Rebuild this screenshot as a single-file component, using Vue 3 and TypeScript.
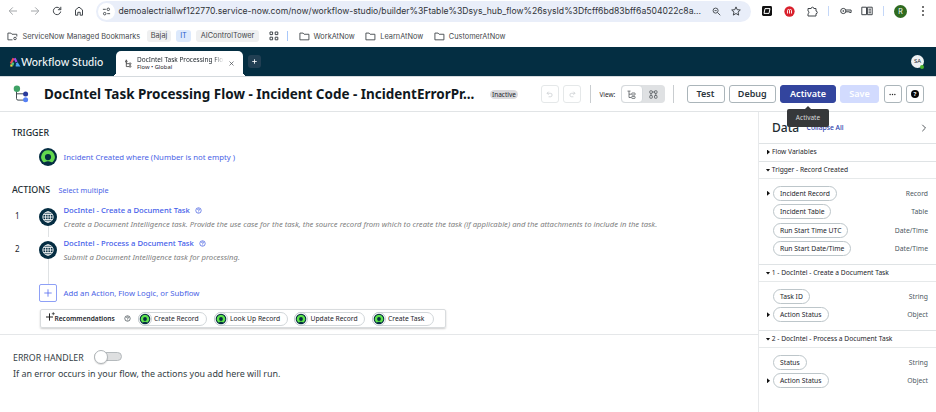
<script setup lang="ts">
interface Variable { name: string; type: string; expandable?: boolean }
interface Section { title: string; open: boolean; items: Variable[] }
interface Action { title: string; description: string }

const bookmarks: string[] = ['WorkAtNow', 'LearnAtNow', 'CustomerAtNow']
const recommendations: string[] = ['Create Record', 'Look Up Record', 'Update Record', 'Create Task']
const actions: Action[] = [
  {
    title: 'DocIntel - Create a Document Task',
    description:
      'Create a Document Intelligence task. Provide the use case for the task, the source record from which to create the task (if applicable) and the attachments to include in the task.',
  },
  { title: 'DocIntel - Process a Document Task', description: 'Submit a Document Intelligence task for processing.' },
]
const sections: Section[] = [
  { title: 'Flow Variables', open: false, items: [] },
  {
    title: 'Trigger - Record Created',
    open: true,
    items: [
      { name: 'Incident Record', type: 'Record', expandable: true },
      { name: 'Incident Table', type: 'Table' },
      { name: 'Run Start Time UTC', type: 'Date/Time' },
      { name: 'Run Start Date/Time', type: 'Date/Time' },
    ],
  },
  {
    title: '1 - DocIntel - Create a Document Task',
    open: true,
    items: [
      { name: 'Task ID', type: 'String' },
      { name: 'Action Status', type: 'Object', expandable: true },
    ],
  },
  {
    title: '2 - DocIntel - Process a Document Task',
    open: true,
    items: [
      { name: 'Status', type: 'String' },
      { name: 'Action Status', type: 'Object', expandable: true },
    ],
  },
]
</script>

<template>
  <div class="window">
    <div class="toolbar">
      <svg class="nav back" viewBox="0 0 10 10"><path d="M9 5H1.4M4.8 1.4 1.2 5l3.6 3.6" /></svg>
      <svg class="nav forward" viewBox="0 0 10 10"><path d="M1 5h7.6M5.2 1.4 8.8 5 5.2 8.6" /></svg>
      <svg class="nav" viewBox="0 0 10 10"><path d="M8.7 5.5A3.7 3.7 0 1 1 7.9 2.6L8.8 3.6M8.8.8v2.9H5.9" /></svg>
      <svg class="nav" viewBox="0 0 10 10"><path d="M1.5 9.2V3.9L5 1.1l3.5 2.8v5.3H6.2V6.3H3.8v2.9z" /></svg>
      <div class="address">
        <span class="site"><svg viewBox="0 0 10 10"><path d="M1 2.6h3.2M5.8 7.4H9" /><circle cx="7" cy="2.6" r="1.4" /><circle cx="3" cy="7.4" r="1.4" /></svg></span>
        <span class="url">demoalectriallwf122770.service-now.com/now/workflow-studio/builder%3Ftable%3Dsys_hub_flow%26sysId%3Dfcff6bd83bff6a504022c8a...</span>
        <svg class="glass" viewBox="0 0 10 10"><circle cx="4" cy="4" r="2.8" /><path d="m6.2 6.2 3 3M2.8 4h2.4" /></svg>
        <svg class="star" viewBox="0 0 10 10"><path d="m5 .9 1.2 2.8 3.1.3L7 6.1l.7 3L5 7.5 2.3 9.1l.7-3L.7 4l3.1-.3z" /></svg>
      </div>
      <svg class="ext-black" viewBox="0 0 10 10"><rect width="10" height="10" rx="1.4" /><path d="m3 2.6h5L7 7.4H2z" /></svg>
      <svg class="ext-red" viewBox="0 0 12 12"><circle cx="6" cy="6" r="5.6" /><path d="M3.8 8.2V5q0-1.2 1.1-1.2T6 5v3.2M6 5q0-1.2 1.1-1.2T8.2 5v3.2" /></svg>
      <svg class="puzzle" viewBox="0 0 11 11"><path d="M1 2.5h3.2a1.3 1.3 0 0 1 2.6 0H9v2.6a1.3 1.3 0 0 1 0 2.6V10H1V7.6a1.3 1.3 0 0 0 0-2.5z" /></svg>
      <i class="split s1"></i>
      <svg class="key" viewBox="0 0 12 8"><circle cx="3.3" cy="4" r="2.6" /><circle cx="3.3" cy="4" r=".5" /><path d="M5.8 3h5.3v2.5H9.6V4.8H5.8" /></svg>
      <svg class="reader" viewBox="0 0 12 10"><path d="M.8 1.2h4.7v7.5H.8zM6.4 1.2h4.8v7.5H6.4zM7.5 3.2H10M7.5 5H10M7.5 6.8H10" /></svg>
      <i class="split s2"></i>
      <span class="profile">R</span>
      <svg class="kebab" viewBox="0 0 4 12"><circle cx="2" cy="2" r="1" /><circle cx="2" cy="6" r="1" /><circle cx="2" cy="10" r="1" /></svg>
    </div>

    <div class="bookmarks">
      <svg class="folder managed" viewBox="0 0 12 10"><path d="M6 8.7H.9V1.2h3.3l1.2 1.3h5.4V5" /><circle cx="8.8" cy="7.2" r="1.4" /></svg>
      <span class="bm-name">ServiceNow Managed Bookmarks</span>
      <span class="tag bajaj">Bajaj</span>
      <span class="tag it">IT</span>
      <span class="tag tower">AIControlTower</span>
      <svg class="apps" viewBox="0 0 10 10"><path d="M1 1h2.6v2.6H1zM6.2 1h2.6v2.6H6.2zM1 6.2h2.6v2.6H1zM6.2 6.2h2.6v2.6H6.2z" /></svg>
      <i class="split s3"></i>
      <span v-for="b in bookmarks" :key="b" class="bookmark">
        <svg class="folder" viewBox="0 0 12 10"><path d="M.9 1.2h3.5l1.2 1.3h5.3v6.2H.9z" /></svg>{{ b }}
      </span>
    </div>

    <header class="app-header">
      <svg class="logo" viewBox="0 0 11 10">
        <path d="M4.6 1.2 1.8 6.600" stroke="#ed4b54" /><path d="M1.3 8.5h2.2" stroke="#ffda38" /><path d="M4.200 5.5 3.3 8.4" stroke="#51c878" /><path d="M5.6 1.2 7.5 5" stroke="#a24be8" /><path d="M7.7 5.8 9.4 8.5H6.7" stroke="#4ba8f4" />
      </svg>
      <span class="brand">Workflow Studio</span>
      <div class="tab">
        <svg class="tab-icon" viewBox="0 0 8 10"><path d="M1.5 3v5.5h3M1.5 5.2h3" /><path d="M.5 3.2 1.5.8l1 2.4z" /><circle cx="5.8" cy="5.2" r="1" /><circle cx="5.8" cy="8.3" r="1" /></svg>
        <span class="tab-text"><span class="tab-title">DocIntel Task Processing Flo</span><span class="tab-sub">Flow • Global</span></span>
        <svg class="close" viewBox="0 0 6 6"><path d="m.6.6 4.8 4.8M5.4.6.6 5.4" /></svg>
      </div>
      <span class="new-tab"><svg viewBox="0 0 6 6"><path d="M3 .3v5.4M.3 3h5.4" /></svg></span>
      <span class="avatar">SA<i></i></span>
    </header>

    <div class="title-bar">
      <svg class="flow-icon" viewBox="0 0 16 18"><path d="M3.5 5v8.5q0 1.6 1.5 1.6h6M3.5 8.8h8" /><circle cx="3.9" cy="3.7" r="3.2" fill="#3fa266" /><circle cx="12.6" cy="8.9" r="2.500" fill="#28399b" /><circle cx="12.6" cy="14.8" r="2.500" fill="#5580f5" /></svg>
      <h1>DocIntel Task Processing Flow - Incident Code - IncidentErrorPr...</h1>
      <span class="status">Inactive</span>
      <button class="square undo"><svg viewBox="0 0 8 8"><path d="M3 .8 1.2 2.6 3 4.4M1.3 2.6H5a2 2 0 0 1 0 4H3" /></svg></button>
      <button class="square redo"><svg viewBox="0 0 8 8"><path d="M5 .8 6.8 2.6 5 4.4M6.7 2.6H3a2 2 0 0 0 0 4h2" /></svg></button>
      <i class="rule r1"></i>
      <span class="view">View:</span>
      <span class="toggle">
        <span class="seg on"><svg viewBox="0 0 9 9"><path d="M.5 1.1h3M2 1.2v6.3h2M2 4.2h2" /><rect x="4.7" y="3" width="3.4" height="2" rx=".5" /><rect x="4.7" y="6.4" width="3.4" height="2" rx=".5" /></svg></span>
        <span class="seg"><svg viewBox="0 0 9 9"><rect x=".8" y=".8" width="2.5" height="2.5" rx=".5" /><rect x="5.5" y=".8" width="2.5" height="2.5" rx=".5" /><rect x=".8" y="5.5" width="2.5" height="2.7" rx=".5" /><rect x="5.5" y="5.5" width="2.5" height="2.7" rx=".5" /><path d="M3.3 2h2.2M2 3.3v2.2M6.8 3.3v2.2" /></svg></span>
      </span>
      <i class="rule r2"></i>
      <button class="btn test">Test</button>
      <button class="btn debug">Debug</button>
      <span class="activate-wrap"><button class="btn activate">Activate</button><span class="tooltip">Activate</span></span>
      <button class="btn save">Save</button>
      <button class="square more"><svg viewBox="0 0 8 8"><circle cx="1.3" cy="4" r=".8" /><circle cx="4" cy="4" r=".8" /><circle cx="6.7" cy="4" r=".8" /></svg></button>
      <button class="square help"><span>?</span></button>
    </div>

    <div class="body">
      <main>
        <section class="flow">
          <h2 class="trigger-head">TRIGGER</h2>
          <div class="trigger">
            <svg class="now" viewBox="0 0 18 18"><circle cx="9" cy="9" r="9" fill="#052d42" /><path d="M9 2.2a6.800 6.800 0 0 0-4.7 11.700q.8.800 1.700.200Q9 12.400 12 14.100q.9.600 1.700-.200A6.800 6.800 0 0 0 9 2.200zM9 12.200a3.100 3.100 0 1 1 0-6.200 3.100 3.100 0 0 1 0 6.200z" fill="#62d84e" /></svg>
            <a>Incident Created where (Number is not empty )</a>
          </div>
          <div class="actions-head"><h2>ACTIONS</h2><a>Select multiple</a></div>
          <div class="steps">
            <div v-for="(a, i) in actions" :key="a.title" class="step">
              <span class="num">{{ i + 1 }}</span>
              <span class="node"><svg viewBox="0 0 18 18"><circle cx="9" cy="9" r="9" fill="#052d42" /><g fill="none" stroke="#fff" stroke-width=".8"><circle cx="9" cy="9" r="5.200" /><ellipse cx="9" cy="9" rx="2.500" ry="5.200" /><path d="M3.800 9h10.400M4.700 6.500h8.600M4.700 11.500h8.600M9 3.800v10.400" /></g></svg></span>
              <span class="step-text">
                <span class="step-title">{{ a.title }}<svg class="q" viewBox="0 0 8 8"><circle cx="4" cy="4" r="3.1" /><path d="M2.900 3.300q0-1.100 1.100-1.100t1.100 1Q5.100 3.900 4 4.300v.5M4 5.500v.6" /></svg></span>
                <em>{{ a.description }}</em>
              </span>
            </div>
          </div>
          <div class="add"><span class="plus"><svg viewBox="0 0 8 8"><path d="M4 .3v7.400M.3 4h7.400" /></svg></span><a>Add an Action, Flow Logic, or Subflow</a></div>
          <div class="recs">
            <svg class="spark" viewBox="0 0 9 9"><path d="M3.500 1.400V8.600M0 5h7" /><path d="M7.300.2v3M5.800 1.700h3" class="tiny" /></svg>
            <b>Recommendations</b>
            <svg class="q grey" viewBox="0 0 8 8"><circle cx="4" cy="4" r="3.100" /><path d="M2.900 3.300q0-1.100 1.100-1.100t1.100 1Q5.100 3.900 4 4.300v.5M4 5.500v.6" /></svg>
            <span v-for="(r, i) in recommendations" :key="r" class="rec" :class="'rec-' + i">
              <svg viewBox="0 0 14 14"><circle cx="7" cy="7" r="6.500" fill="#fff" stroke="#a9b3b8" stroke-width=".6" /><circle cx="7" cy="7" r="5.300" fill="#052d42" /><path d="M7 2.700a4.300 4.300 0 0 0-3 7.400q.6.500 1.100.1Q7 9.200 8.900 10.200q.5.400 1.100-.1A4.300 4.300 0 0 0 7 2.700zM7 8.900a1.900 1.900 0 1 1 0-3.800 1.900 1.900 0 0 1 0 3.800z" fill="#5de34b" /></svg>{{ r }}
            </span>
          </div>
        </section>
        <section class="errors">
          <div class="error-head">ERROR HANDLER<span class="switch"><i></i></span></div>
          <p>If an error occurs in your flow, the actions you add here will run.</p>
        </section>
      </main>

      <aside>
        <div class="data-head"><strong>Data</strong><a>Collapse All</a><svg viewBox="0 0 6 8"><path d="m1.300.8 3.200 3.200-3.200 3.200" /></svg></div>
        <section v-for="s in sections" :key="s.title" class="group" :class="{ open: s.open }">
          <h3><i class="caret" :class="{ down: s.open }"></i>{{ s.title }}</h3>
          <div v-if="s.open" class="vars">
            <div v-for="v in s.items" :key="v.name" class="var">
              <span class="lead"><i v-if="v.expandable" class="caret"></i></span>
              <span class="pill">{{ v.name }}</span>
              <span class="type">{{ v.type }}</span>
            </div>
          </div>
        </section>
      </aside>
    </div>
  </div>
</template>

<style>
html, body { margin: 0; background: #fff; overflow: hidden; }
</style>

<style scoped>
* { box-sizing: border-box; }
.window { width: 936px; height: 412px; overflow: hidden; background: #fff; font-family: "Noto Sans", "Open Sans", sans-serif; color: #1d252b; display: flex; flex-direction: column; }
svg { flex: none; display: block; fill: none; stroke: #41464b; stroke-width: 1; overflow: visible; }
i { display: block; flex: none; }
h1, h2, h3, p { margin: 0; }
button { font-family: inherit; padding: 0; margin: 0; }
a { color: #4a63e6; }

.toolbar { height: 24px; flex: none; display: flex; align-items: center; padding: 0 0 2px 7.500px; font-family: Inter, Roboto, sans-serif; }
.nav { width: 10px; height: 10px; margin-right: 12.300px; }
.back, .forward { stroke: #a3a6a9; }
.address { width: 655px; height: 21px; margin-left: -.7px; background: #e9eef9; border-radius: 11px; display: flex; align-items: center; flex: none; }
.site { width: 17px; height: 17px; margin-left: 1.500px; border-radius: 50%; background: #fff; display: flex; align-items: center; justify-content: center; flex: none; }
.site svg { width: 9px; height: 9px; }
.url { width: 592px; margin-left: 4px; font-size: 8.600px; color: #303338; white-space: nowrap; letter-spacing: 0.020px; flex: none; }
.glass { width: 9px; height: 9px; margin-left: 1px; }
.star { width: 10px; height: 10px; margin-left: 10.500px; }
.ext-black { width: 10px; height: 10px; margin-left: 11px; fill: #111; stroke: none; }
.ext-black path { stroke: #fff; fill: none; }
.ext-red { width: 11px; height: 11px; margin-left: 12px; stroke: #fff; }
.ext-red circle { fill: #d9202c; stroke: none; }
.puzzle { width: 11px; height: 11px; margin-left: 12px; }
.split { width: 1px; height: 10px; background: #c4d7f8; }
.s1 { margin-left: 10px; }
.key { width: 12px; height: 8px; margin-left: 11px; }
.reader { width: 12px; height: 10px; margin-left: 9px; }
.s2 { margin-left: 10px; }
.profile { width: 13px; height: 13px; margin-left: 10px; border-radius: 50%; background: #2f6b20; color: #fff; font-size: 7px; text-align: center; line-height: 13px; flex: none; }
.kebab { width: 4px; height: 12px; margin-left: 13.500px; fill: #444; stroke: none; }

.bookmarks { height: 23px; flex: none; display: flex; align-items: center; padding: 1px 0 0 7px; font: 7.350px Inter, Roboto, sans-serif; color: #45484c; white-space: nowrap; }
.folder { width: 11px; height: 9px; }
.bm-name { width: 124.500px; margin-left: 4.500px; }
.tag { height: 12px; line-height: 12px; border-radius: 3px; background: #eff0f1; text-align: center; flex: none; }
.bajaj { width: 24px; }
.it { width: 15px; margin-left: 5px; background: #dce9fc; color: #2960cd; }
.tower { width: 63px; margin-left: 5px; }
.apps { width: 10px; height: 10px; margin-left: 9.500px; }
.s3 { margin-left: 8.500px; background: #a9c8fa; }
.bookmark { display: flex; align-items: center; gap: 4px; margin-left: 10.500px; }

.app-header { height: 29px; flex: none; background: #042e42; display: flex; align-items: center; padding-left: 9px; }
.logo { width: 11px; height: 10px; stroke-width: 2.200; }
.brand { width: 95px; margin-left: 1px; color: #f1f5f6; font: 500 10.900px Lato, sans-serif; letter-spacing: .1px; white-space: nowrap; }
.tab { width: 127px; height: 25px; margin-top: 4px; border-radius: 5px 5px 0 0; background: #fff; display: flex; align-items: center; padding-left: 9px; position: relative; }
.tab::before, .tab::after { content: ""; position: absolute; bottom: 0; width: 4px; height: 4px; }
.tab::before { left: -4px; background: radial-gradient(circle at 0 0, transparent 4px, #fff 4px); }
.tab::after { right: -4px; background: radial-gradient(circle at 100% 0, transparent 4px, #fff 4px); }
.tab-icon { width: 7px; height: 9px; stroke: #222; stroke-width: .8; }
.tab-text { width: 87px; margin-left: 5px; display: flex; flex-direction: column; overflow: hidden; white-space: nowrap; }
.tab-title { font-size: 6.500px; line-height: 8px; color: #1d252b; -webkit-mask-image: linear-gradient(90deg, #000 88%, transparent 100%); mask-image: linear-gradient(90deg, #000 88%, transparent 100%); }
.tab-sub { font-size: 5.800px; line-height: 7px; }
.close { width: 5px; height: 5px; margin-left: 5px; stroke-width: .8; }
.new-tab { width: 13px; height: 13px; margin-left: 4.500px; border-radius: 3px; background: #213f53; display: flex; align-items: center; justify-content: center; }
.new-tab svg { width: 5px; height: 5px; stroke: #fff; stroke-width: 1; }
.avatar { width: 13px; height: 13px; margin-left: auto; margin-right: 12px; background: #edf1f3; border-radius: 50%; font-size: 6px; line-height: 13px; text-align: center; position: relative; }
.avatar i { position: absolute; right: 0; bottom: -1px; width: 4px; height: 4px; border-radius: 50%; background: #4bb52c; }

.title-bar { height: 36px; flex: none; border-top: 1px solid #d5dade; border-bottom: 1px solid #e1e4e6; display: flex; align-items: center; padding-left: 13px; position: relative; z-index: 2; }
.flow-icon { width: 16px; height: 18px; stroke: #303b42; stroke-width: .9; }
.flow-icon circle { stroke: none; }
h1 { width: 445px; margin-left: 15px; font-size: 13.470px; font-weight: 700; line-height: 20px; color: #10181d; white-space: nowrap; flex: none; }
.status { width: 28px; height: 9px; margin-left: 1px; border-radius: 5px; background: #dadadd; font-size: 6.500px; line-height: 9px; text-align: center; flex: none; }
.square { width: 18px; height: 18px; border: 1px solid #abb5ba; border-radius: 3px; background: #fff; display: flex; align-items: center; justify-content: center; flex: none; }
.square svg { width: 7px; height: 7px; }
.undo, .redo { border-color: #e5e8e9; }
.undo svg, .redo svg { stroke: #c4c9cc; stroke-width: .8; }
.undo { margin-left: 22.500px; }
.redo { margin-left: 4.500px; }
.rule { width: 1px; height: 18px; background: #c9cdd0; }
.r1 { margin-left: 8.500px; }
.view { width: 17px; margin-left: 9px; font-size: 6.400px; white-space: nowrap; }
.toggle { width: 44px; height: 18px; margin-left: 4px; border-radius: 4px; background: #dfe1e3; display: flex; flex: none; }
.seg { width: 22px; display: flex; align-items: center; justify-content: center; }
.seg.on { background: #fff; border: 1px solid #d5d9dc; border-radius: 4px; }
.seg svg { width: 9px; height: 9px; stroke-width: .7; }
.r2 { margin-left: 8.500px; }
.btn { height: 18px; border: 1px solid #abb5ba; border-radius: 3px; background: #fff; font-size: 9px; line-height: 16px; font-weight: 600; color: #2b353c; flex: none; display: block; }
.test { width: 38px; margin-left: 12.500px; }
.debug { width: 47.500px; margin-left: 4px; }
.activate-wrap { margin-left: 4px; position: relative; }
.activate { width: 56px; background: #33459e; border-color: #33459e; color: #fff; }
.save { width: 39px; margin-left: 4px; background: #d2dbfe; border-color: #d2dbfe; color: #fff; }
.more { margin-left: 4.500px; }
.more svg { fill: #222; stroke: none; }
.help { margin-left: 4.500px; }
.help span { width: 8px; height: 8px; border-radius: 50%; background: #060606; color: #fff; font-size: 6px; line-height: 8px; font-weight: 700; }
.tooltip { position: absolute; left: 7px; top: 24px; width: 42px; height: 18px; background: #36383a; border-radius: 2px; color: #d9dadb; font-size: 6.500px; line-height: 18px; text-align: center; }
.tooltip::before { content: ""; position: absolute; left: 18px; top: -3px; border: 3px solid transparent; border-top: 0; border-bottom-color: #36383a; }

.body { display: flex; flex: 1; min-height: 0; }
main { width: 758px; flex: none; }
.flow { height: 223px; border-bottom: 1px solid #e5e7e9; padding: 14px 0 0 12px; display: flex; flex-direction: column; align-items: flex-start; }
h2 { font-size: 8.850px; line-height: 12px; font-weight: 500; color: #222c32; }
.trigger-head { padding-top: .6px; height: 12px; }
.trigger { display: flex; align-items: center; margin: 9.500px 0 0 27px; height: 18px; font-size: 7.780px; }
.now { width: 18px; height: 18px; margin-right: 6.500px; stroke: none; }
.actions-head { display: flex; align-items: center; margin-top: 18.500px; height: 12px; }
.actions-head a { font-size: 7.250px; margin-left: 8.500px; }
.steps { margin-top: 8px; }
.step { height: 33px; display: flex; }
.num { width: 27px; padding-left: 3px; font-size: 8px; line-height: 24px; flex: none; }
.node { width: 18px; height: 33px; padding-top: 3.500px; flex: none; background: linear-gradient(#dfe2e4, #dfe2e4) 9px 8px / 1px 25px no-repeat; }
.node svg { width: 18px; height: 18px; stroke: none; }
.step-text { margin-left: 6.500px; display: flex; flex-direction: column; white-space: nowrap; }
.step-title { color: #455eea; font-size: 7.680px; line-height: 13px; font-weight: 500; display: flex; align-items: center; }
.q { width: 7px; height: 7px; margin-left: 5px; stroke: #3f5ae0; stroke-width: .8; }
.q.grey { stroke: #3d474e; }
em { font-size: 7.670px; line-height: 14px; color: #808080; }
.add { display: flex; align-items: center; padding: 14px 0 0 27px; font-size: 7.780px; background: linear-gradient(#dfe2e4, #dfe2e4) 36px 0 / 1px 14px no-repeat; }
.plus { width: 18px; height: 18px; border: 1px solid #8ea0f6; border-radius: 2px; margin-right: 6.500px; display: flex; align-items: center; justify-content: center; }
.plus svg { width: 8px; height: 8px; stroke: #536bef; stroke-width: .8; }
.recs { width: 406px; height: 19px; margin: 7px 0 0 28px; border: 1px solid #d9dcde; border-radius: 2px; box-shadow: 0 1px 2px #0003; display: flex; align-items: center; font-size: 7px; white-space: nowrap; }
.spark { width: 9px; height: 9px; margin: -4px 0 0 5px; stroke: #222; stroke-width: 1; }
.spark .tiny { stroke-width: .7; }
.recs b { width: 65px; font-size: 6.600px; font-weight: 600; margin-left: -.5px; }
.recs .q { margin-left: 4.500px; }
.rec { width: 69.500px; height: 14px; border: 1px solid #d2d7da; border-radius: 7px; margin-left: 6.500px; display: flex; align-items: center; gap: 2.500px; font-size: 6.750px; flex: none; }
.rec svg { width: 14px; height: 14px; margin-left: -1px; stroke: none; }
.rec-1 { width: 74px; }
.rec-2 { width: 71px; }
.rec-3 { width: 62px; }
.errors { padding: 13.500px 0 0 13px; color: #343e45; }
.error-head { display: flex; align-items: center; height: 18px; font-size: 8.800px; }
.switch { width: 28px; height: 9px; border: 1px solid #b5babd; border-radius: 5px; background: #dedfe0; margin: -2px 0 0 10.500px; position: relative; }
.switch i { position: absolute; left: -1px; top: -3px; width: 14px; height: 14px; background: #fff; border: 1px solid #b0b5b8; border-radius: 50%; box-shadow: 0 1px 1px #0002; }
.errors p { font-size: 8.930px; line-height: 13px; margin-top: 0; }

aside { width: 178px; border-left: 1px solid #e7e9eb; }
.data-head { height: 31px; display: flex; align-items: center; padding: 0 9px 0 13px; }
.data-head strong { font-size: 12px; font-weight: 500; color: #222b31; }
.data-head a { margin-left: 7.500px; font-size: 6.750px; font-weight: 500; color: #2d3fae; }
.data-head svg { width: 6px; height: 8px; margin-left: auto; stroke-width: .9; }
.group { border-top: 1px solid #dfe3e5; }
h3 { height: 17px; font-size: 6.670px; line-height: 16px; font-weight: 400; padding-left: 7px; display: flex; align-items: center; white-space: nowrap; }
.group:not(.open) h3 { padding-bottom: 1px; }
.group.open h3 { border-bottom: 1px solid #e6e9ea; }
.caret { width: 3px; height: 5px; background: #111; clip-path: polygon(0 0, 100% 50%, 0 100%); margin: 0 2px 0 1px; }
.caret.down { width: 5px; height: 3px; clip-path: polygon(0 0, 100% 0, 50% 100%); margin: 0 1.300px 0 -.5px; }
.vars { padding: 5px 0 6px; }
.var { height: 18.500px; display: flex; align-items: center; padding-right: 8px; }
.lead { width: 14px; padding-left: 7px; }
.pill { height: 15px; padding: 0 6px; border: 1px solid #bdc6ca; border-radius: 8px; font-size: 6.750px; line-height: 13px; white-space: nowrap; }
.type { margin-left: auto; font-size: 6.800px; color: #4d585f; }
</style>
